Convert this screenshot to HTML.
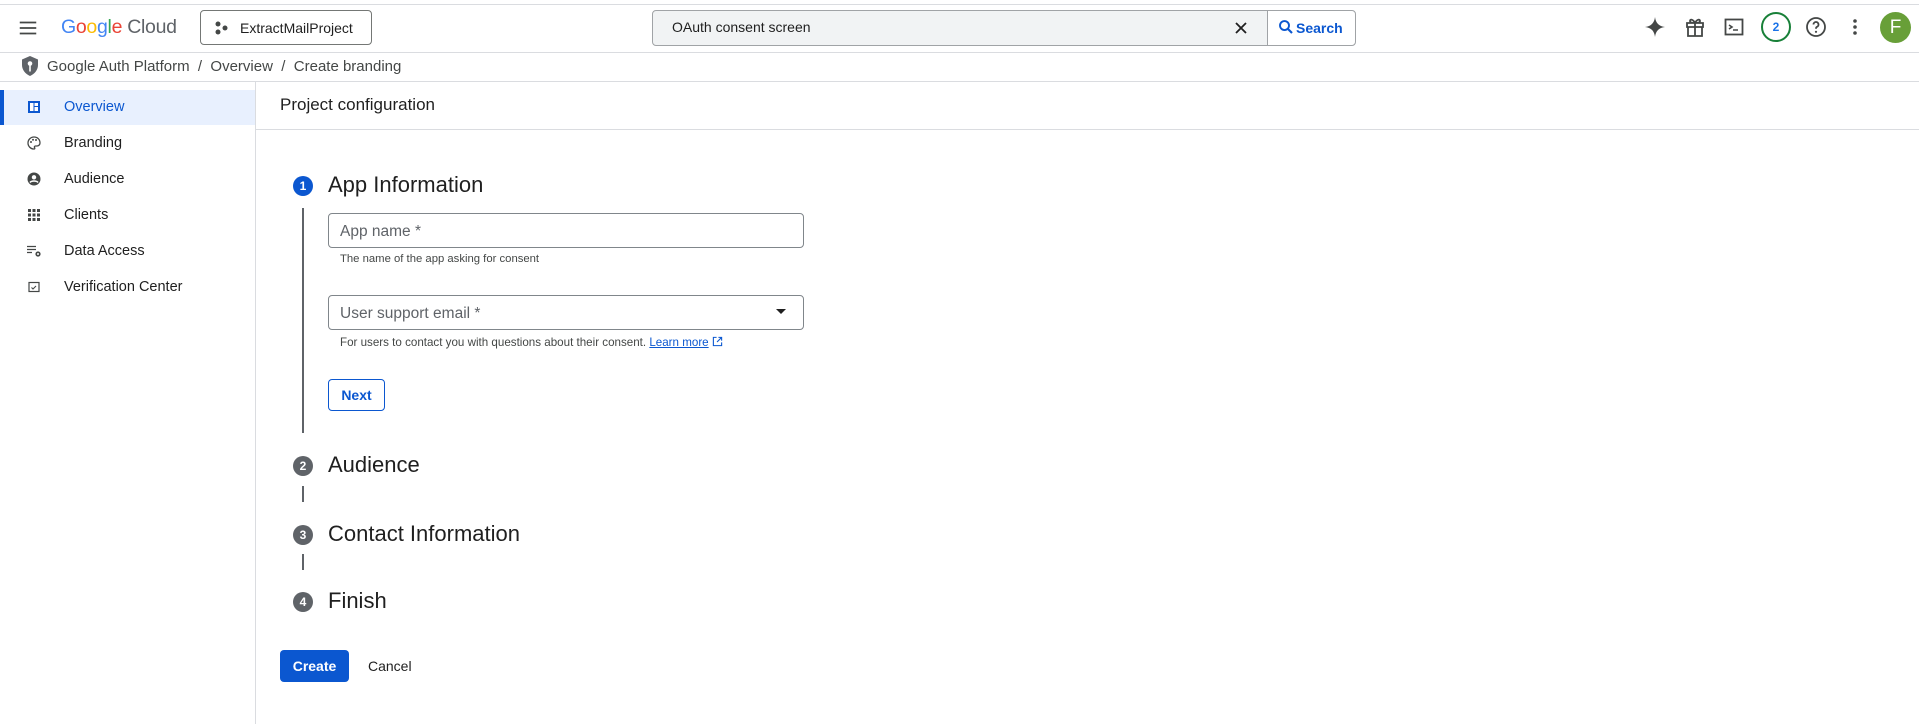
<!DOCTYPE html>
<html><head><meta charset="utf-8"><style>
*{box-sizing:border-box;margin:0;padding:0}
body{width:1919px;height:724px;overflow:hidden;background:#fff;font-family:"Liberation Sans",Arial,sans-serif;color:#1f1f1f;position:relative}
.a{position:absolute}
.line{position:absolute;background:#dadce0}
.nav{position:absolute;left:0;width:255px;height:36px;display:flex;align-items:center;font-size:14.5px;color:#1f1f1f}
.nav .ic{position:absolute;left:26px;width:16px;height:16px}
.nav span{position:absolute;left:64px}
.step{position:absolute;left:293px;width:20px;height:20px;border-radius:50%;background:#5f6368;color:#fff;font-size:12px;font-weight:bold;text-align:center;line-height:20px}
.st{position:absolute;left:328px;font-size:22px;color:#1f1f1f}
.inp{position:absolute;left:328px;width:476px;height:35px;border:1px solid #80868b;border-radius:4px;font-size:15.5px;color:#5f6368;padding:9px 11px}
.help{position:absolute;left:340px;font-size:11.3px;color:#444746}
.hi{position:absolute;top:15px;width:24px;height:24px}
</style></head><body>
<div class="line" style="top:4px;left:0;width:1919px;height:1px"></div>
<svg class="a" style="left:17px;top:17px" width="22" height="22" viewBox="0 0 24 24"><path d="M3 6h18M3 12h18M3 18h18" stroke="#444746" stroke-width="2"/></svg>
<div class="a" style="left:61px;top:16px;font-size:19.5px;letter-spacing:-0.3px"><span style="color:#4285f4">G</span><span style="color:#ea4335">o</span><span style="color:#fbbc04">o</span><span style="color:#4285f4">g</span><span style="color:#34a853">l</span><span style="color:#ea4335">e</span><span style="color:#5f6368"> Cloud</span></div>
<div class="a" style="left:200px;top:10px;width:172px;height:35px;border:1px solid #747775;border-radius:4px;font-size:14px;padding:9px 0 0 39px">ExtractMailProject</div>
<svg class="a" style="left:214px;top:20px" width="16" height="16" viewBox="0 0 16 16"><circle cx="4" cy="4" r="2.5" fill="#444746"/><circle cx="11" cy="8" r="2.5" fill="#444746"/><circle cx="4" cy="12" r="2.5" fill="#444746"/></svg>
<div class="a" style="left:652px;top:10px;width:704px;height:36px;border:1px solid #a0a3a6;border-radius:4px;background:#f1f3f4"></div>
<div class="a" style="left:1267px;top:11px;width:88px;height:34px;background:#fff;border-left:1px solid #a0a3a6;border-radius:0 4px 4px 0"></div>
<div class="a" style="left:672px;top:19px;font-size:14px;color:#1f1f1f">OAuth consent screen</div>
<svg class="a" style="left:1233px;top:20px" width="16" height="16" viewBox="0 0 16 16"><path d="M3 3l10 10M13 3L3 13" stroke="#1f1f1f" stroke-width="1.8"/></svg>
<svg class="a" style="left:1277px;top:18px" width="18" height="18" viewBox="0 0 24 24"><circle cx="10" cy="10" r="6" fill="none" stroke="#0b57d0" stroke-width="2.5"/><path d="M14.5 14.5L20 20" stroke="#0b57d0" stroke-width="2.8"/></svg>
<div class="a" style="left:1296px;top:20px;font-size:14px;color:#0b57d0;font-weight:bold">Search</div>
<svg class="hi" style="left:1643px" viewBox="0 0 24 24"><path d="M12 2C12.7 8 16 11.3 22 12 16 12.7 12.7 16 12 22 11.3 16 8 12.7 2 12 8 11.3 11.3 8 12 2z" fill="#444746"/></svg>
<svg class="hi" style="left:1683px" viewBox="0 0 24 24"><path d="M4 8h16v4H4zM5 12h14v9H5zM12 8v13M12 8C10 4 7 4 7 6s3 2 5 2c2 0 5 0 5-2s-3-2-5 2" fill="none" stroke="#444746" stroke-width="1.8"/></svg>
<svg class="hi" style="left:1722px" viewBox="0 0 24 24"><rect x="3.5" y="4.5" width="17" height="15" fill="none" stroke="#444746" stroke-width="1.8"/><path d="M7 10l3 2-3 2M11 15h5" fill="none" stroke="#444746" stroke-width="1.6"/></svg>
<div class="a" style="left:1761px;top:12px;width:30px;height:30px;border:2px solid #188038;border-radius:50%;font-size:12px;font-weight:bold;color:#1a73e8;text-align:center;line-height:26px">2</div>
<svg class="hi" style="left:1804px" viewBox="0 0 24 24"><circle cx="12" cy="12" r="9" fill="none" stroke="#444746" stroke-width="1.8"/><path d="M9.5 9.5a2.5 2.5 0 1 1 3.5 2.3c-.8.4-1 1-1 1.9" fill="none" stroke="#444746" stroke-width="1.8"/><circle cx="12" cy="16.8" r="1.1" fill="#444746"/></svg>
<svg class="hi" style="left:1843px" viewBox="0 0 24 24"><circle cx="12" cy="6" r="1.8" fill="#444746"/><circle cx="12" cy="12" r="1.8" fill="#444746"/><circle cx="12" cy="18" r="1.8" fill="#444746"/></svg>
<div class="a" style="left:1880px;top:12px;width:31px;height:31px;border-radius:50%;background:#689f38;color:#fff;font-size:19px;text-align:center;line-height:31px">F</div>
<div class="line" style="top:52px;left:0;width:1919px;height:1px"></div>
<svg class="a" style="left:21px;top:56px" width="18" height="20" viewBox="0 0 18 20"><path d="M9 0L17 3.5V9c0 5-3.5 9-8 11C4.5 18 1 14 1 9V3.5z" fill="#5f6368"/><circle cx="9" cy="7.5" r="2.3" fill="#fff"/><path d="M9 9.5v6" stroke="#fff" stroke-width="1.6"/></svg>
<div class="a" style="left:47px;top:58px;font-size:15px;color:#444746">Google Auth Platform &nbsp;/&nbsp; Overview &nbsp;/&nbsp; Create branding</div>
<div class="line" style="top:81px;left:0;width:1919px;height:1px"></div>
<div class="line" style="top:81px;left:255px;width:1px;height:643px"></div>
<div class="a" style="top:90px;left:0;width:255px;height:35px;background:#e8f0fe"></div>
<div class="a" style="top:90px;left:0;width:4px;height:35px;background:#0b57d0"></div>
<div class="nav" style="top:89px;color:#0b57d0"><svg class="ic" viewBox="0 0 16 16"><rect x="2" y="2" width="12" height="12" fill="#0b57d0"/><path d="M4 4h3.5v8H4zM8.5 4H12v3H8.5zM8.5 8H12v4H8.5z" fill="#fff"/></svg><span>Overview</span></div>
<div class="nav" style="top:125px"><svg class="ic" viewBox="0 0 16 16"><path d="M8 2a6 6 0 1 0 0 12c1 0 1-1 .5-1.5s0-1.5 1-1.5H11a3 3 0 0 0 3-3C14 4.5 11.5 2 8 2z" fill="none" stroke="#444746" stroke-width="1.3"/><circle cx="5" cy="7" r="1" fill="#444746"/><circle cx="7" cy="4.8" r="1" fill="#444746"/><circle cx="10" cy="5" r="1" fill="#444746"/></svg><span>Branding</span></div>
<div class="nav" style="top:161px"><svg class="ic" viewBox="0 0 16 16"><circle cx="8" cy="8" r="6.5" fill="#444746"/><circle cx="8" cy="6.3" r="2.2" fill="#fff"/><path d="M4 11.5c1.5-2 6.5-2 8 0" stroke="#fff" stroke-width="1.5" fill="none"/></svg><span>Audience</span></div>
<div class="nav" style="top:197px"><svg class="ic" viewBox="0 0 16 16" fill="#444746"><rect x="2" y="2" width="3" height="3"/><rect x="6.5" y="2" width="3" height="3"/><rect x="11" y="2" width="3" height="3"/><rect x="2" y="6.5" width="3" height="3"/><rect x="6.5" y="6.5" width="3" height="3"/><rect x="11" y="6.5" width="3" height="3"/><rect x="2" y="11" width="3" height="3"/><rect x="6.5" y="11" width="3" height="3"/><rect x="11" y="11" width="3" height="3"/></svg><span>Clients</span></div>
<div class="nav" style="top:233px"><svg class="ic" viewBox="0 0 16 16"><path d="M1 3.5h9M1 6.5h9M1 9.5h5" stroke="#444746" stroke-width="1.3"/><circle cx="12" cy="11" r="2.6" fill="#444746"/><circle cx="12" cy="11" r="1" fill="#fff"/></svg><span>Data Access</span></div>
<div class="nav" style="top:269px"><svg class="ic" viewBox="0 0 16 16"><rect x="3" y="3.5" width="10" height="9" fill="none" stroke="#444746" stroke-width="1.2"/><path d="M5.5 8.5l1.5 1.5 3-3" fill="none" stroke="#444746" stroke-width="1.1"/></svg><span>Verification Center</span></div>
<div class="a" style="left:280px;top:95px;font-size:17px;color:#1f1f1f">Project configuration</div>
<div class="line" style="top:129px;left:256px;width:1663px;height:1px"></div>
<div class="step" style="top:176px;background:#0b57d0">1</div>
<div class="st" style="top:172px">App Information</div>
<div class="a" style="left:302px;top:208px;width:1.5px;height:225px;background:#5f6368"></div>
<div class="inp" style="top:213px">App name *</div>
<div class="help" style="top:253px">The name of the app asking for consent</div>
<div class="inp" style="top:295px">User support email *</div>
<svg class="a" style="left:775px;top:308px" width="12" height="8" viewBox="0 0 12 8"><path d="M1 1h10L6 6z" fill="#1f1f1f"/></svg>
<div class="help" style="top:336px;font-size:11.6px">For users to contact you with questions about their consent. <span style="color:#0b57d0;text-decoration:underline">Learn more</span> <svg width="11" height="11" viewBox="0 0 12 12" style="vertical-align:-1px"><path d="M5 1.5H1.5v9h9V7M7 1.5h3.5V5M10.5 1.5L5.5 6.5" fill="none" stroke="#0b57d0" stroke-width="1.2"/></svg></div>
<div class="a" style="left:328px;top:379px;width:57px;height:32px;border:1px solid #0b57d0;border-radius:4px;color:#0b57d0;font-size:14px;font-weight:bold;text-align:center;line-height:30px">Next</div>
<div class="step" style="top:456px">2</div>
<div class="st" style="top:452px">Audience</div>
<div class="a" style="left:302px;top:486px;width:1.5px;height:16px;background:#5f6368"></div>
<div class="step" style="top:525px">3</div>
<div class="st" style="top:521px">Contact Information</div>
<div class="a" style="left:302px;top:554px;width:1.5px;height:16px;background:#5f6368"></div>
<div class="step" style="top:592px">4</div>
<div class="st" style="top:588px">Finish</div>
<div class="a" style="left:280px;top:650px;width:69px;height:32px;background:#0b57d0;border-radius:4px;color:#fff;font-size:14px;font-weight:bold;text-align:center;line-height:32px">Create</div>
<div class="a" style="left:368px;top:658px;font-size:14px;color:#1f1f1f">Cancel</div>
</body></html>
